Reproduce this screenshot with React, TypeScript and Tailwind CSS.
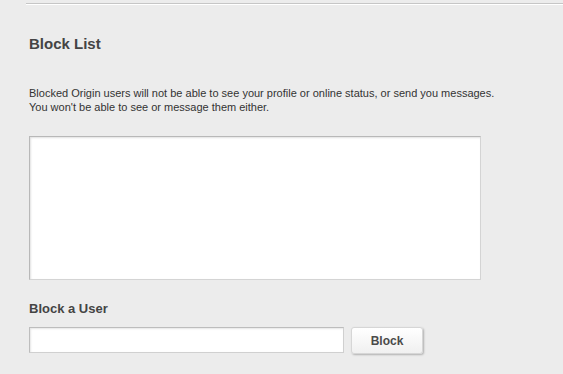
const App = () => {
  return (
    <div className="h-[374px] w-[563px] overflow-hidden bg-[#ececec] font-['Liberation_Sans',Arial,sans-serif]">
      <div className="pt-[3px] pl-[26px]">
        <div className="border-t border-[#c6c6c6] border-b border-b-white" />
      </div>

      <div className="pl-[29px]">
        <h2 className="mt-[30px] text-[15px] leading-[18px] font-bold text-[#444444]">
          Block List
        </h2>

        <p className="mt-[33px] text-[11px] leading-[14px] text-[#333333]">
          Blocked Origin users will not be able to see your profile or online status, or send you messages.
          <br />
          You won't be able to see or message them either.
        </p>

        <div className="mt-[22px] h-[144px] w-[452px] border border-[#d4d4d4] border-t-[#b8b8b8] border-l-[#b8b8b8] bg-white shadow-[inset_1px_1px_2px_rgba(0,0,0,0.12)]" />

        <h3 className="mt-[21px] text-[13px] leading-[16px] font-bold text-[#444444]">
          Block a User
        </h3>

        <div className="mt-[10px] flex items-start gap-[7px]">
          <input
            type="text"
            className="h-[26px] w-[315px] border border-[#d0d0d0] border-t-[#bdbdbd] border-l-[#bdbdbd] bg-white px-1 text-[12px] outline-none shadow-[inset_1px_1px_2px_rgba(0,0,0,0.1)]"
          />
          <button className="h-[27px] w-[72px] rounded-[3px] border border-[#d6d6d6] bg-gradient-to-b from-white to-[#f0f0f0] text-[12px] font-bold text-[#4a4a4a] shadow-[1px_1px_2px_rgba(0,0,0,0.25)]">
            Block
          </button>
        </div>
      </div>
    </div>
  );
};

export default App;
